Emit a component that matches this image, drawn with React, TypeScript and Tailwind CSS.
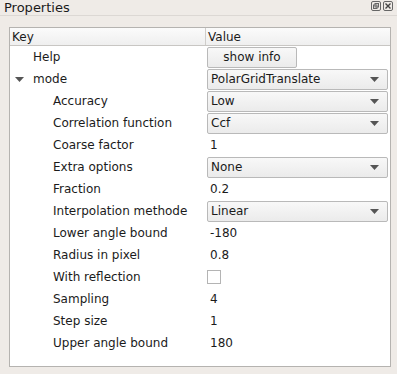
type Row = {
  key: string;
  indent: 0 | 1;
  expander?: boolean;
  kind: 'text' | 'combo' | 'button' | 'check';
  value?: string;
};

const rows: Row[] = [
  { key: 'Help', indent: 0, kind: 'button', value: 'show info' },
  { key: 'mode', indent: 0, expander: true, kind: 'combo', value: 'PolarGridTranslate' },
  { key: 'Accuracy', indent: 1, kind: 'combo', value: 'Low' },
  { key: 'Correlation function', indent: 1, kind: 'combo', value: 'Ccf' },
  { key: 'Coarse factor', indent: 1, kind: 'text', value: '1' },
  { key: 'Extra options', indent: 1, kind: 'combo', value: 'None' },
  { key: 'Fraction', indent: 1, kind: 'text', value: '0.2' },
  { key: 'Interpolation methode', indent: 1, kind: 'combo', value: 'Linear' },
  { key: 'Lower angle bound', indent: 1, kind: 'text', value: '-180' },
  { key: 'Radius in pixel', indent: 1, kind: 'text', value: '0.8' },
  { key: 'With reflection', indent: 1, kind: 'check' },
  { key: 'Sampling', indent: 1, kind: 'text', value: '4' },
  { key: 'Step size', indent: 1, kind: 'text', value: '1' },
  { key: 'Upper angle bound', indent: 1, kind: 'text', value: '180' },
];

function ComboArrow() {
  return (
    <svg width="9" height="5" viewBox="0 0 9 5" className="shrink-0">
      <path d="M0 0 H9 L4.5 5 Z" fill="#555" />
    </svg>
  );
}

function ValueCell({ row }: { row: Row }) {
  if (row.kind === 'combo') {
    return (
      <div className="h-[21px] w-[181px] flex items-center justify-between pl-[3px] pr-[8px] rounded-[2px] border border-[#b9b9b9] bg-gradient-to-b from-[#f8f8f8] to-[#ebebeb]">
        <span>{row.value}</span>
        <ComboArrow />
      </div>
    );
  }
  if (row.kind === 'button') {
    return (
      <div className="h-[21px] w-[90px] flex items-center justify-center rounded-[2px] border border-[#b9b9b9] bg-gradient-to-b from-[#f8f8f8] to-[#ebebeb]">
        {row.value}
      </div>
    );
  }
  if (row.kind === 'check') {
    return <div className="w-[14px] h-[14px] border border-[#b4b4b4] bg-white" />;
  }
  return <span className="pl-[3px]">{row.value}</span>;
}

export default function App() {
  return (
    <div
      className="w-[397px] h-[374px] bg-[#efebe7] text-[12px] text-[#1b1b1b] flex flex-col"
      style={{ fontFamily: '"DejaVu Sans", sans-serif' }}
    >
      {/* title bar */}
      <div className="h-[16px] flex items-center justify-between pl-[4px] pr-[4px] border-b border-[#dcd8d4]">
        <span className="text-[13px] leading-none -mt-[1px]">Properties</span>
        <div className="flex items-center gap-[2px] -mt-[4px]">
          <svg width="10" height="10" viewBox="0 0 10 10">
            <rect x="0.5" y="0.5" width="9" height="9" rx="1.5" fill="none" stroke="#666" />
            <rect x="4" y="2.5" width="3.5" height="3.5" fill="none" stroke="#666" />
            <rect x="2.5" y="4" width="3.5" height="3.5" fill="none" stroke="#666" />
          </svg>
          <svg width="10" height="10" viewBox="0 0 10 10">
            <rect x="0.5" y="0.5" width="9" height="9" rx="1.5" fill="none" stroke="#666" />
            <path d="M2.5 2.5 L7.5 7.5 M7.5 2.5 L2.5 7.5" stroke="#444" strokeWidth="1.4" />
          </svg>
        </div>
      </div>

      {/* tree view */}
      <div className="ml-[9px] mt-[11px] w-[382px] h-[340px] border border-[#b5b3b0] bg-white flex flex-col">
        <div className="h-[18px] flex border-b border-[#c8c6c3] bg-gradient-to-b from-[#fbfbfb] to-[#efefef]">
          <div className="w-[196px] pl-[2px] border-r border-[#cfcdca] flex items-center leading-none">Key</div>
          <div className="flex-1 pl-[2px] flex items-center leading-none">Value</div>
        </div>
        <div className="flex flex-col">
          {rows.map(row => (
            <div key={row.key} className="h-[22px] flex items-center">
              <div className="w-[197px] flex items-center h-full">
                <div className="w-[23px] flex justify-start pl-[5px]">
                  {row.expander && (
                    <svg width="9" height="5" viewBox="0 0 9 5">
                      <path d="M0 0 H9 L4.5 5 Z" fill="#555" />
                    </svg>
                  )}
                </div>
                <span className={row.indent ? 'pl-[20px]' : ''}>{row.key}</span>
              </div>
              <div className="flex-1 flex items-center h-full">
                <ValueCell row={row} />
              </div>
            </div>
          ))}
        </div>
      </div>
    </div>
  );
}
